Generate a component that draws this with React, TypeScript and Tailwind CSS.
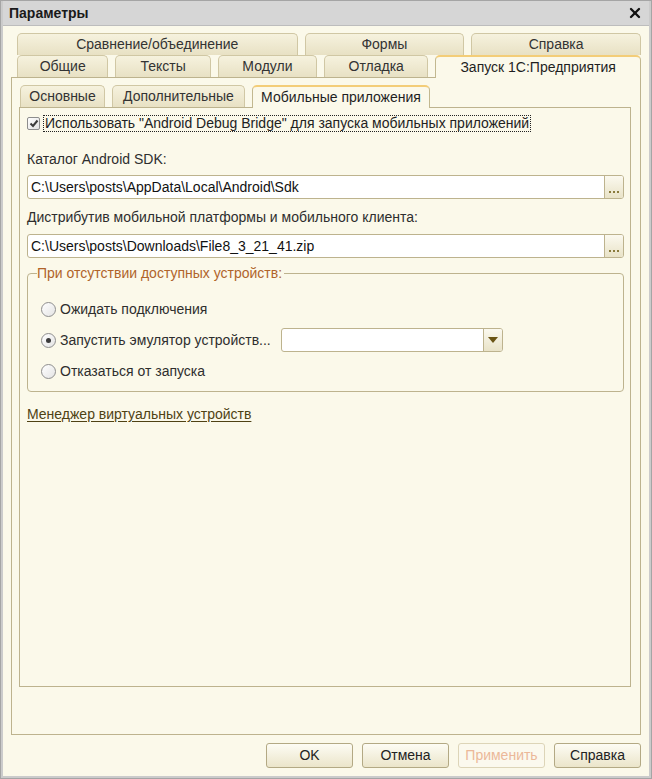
import { X } from "lucide-react"

const border = "border-[#bdb38e]"

function Tab({ label, className, active }: { label: string; className: string; active?: boolean }) {
  return (
    <div
      className={
        "flex items-center justify-center rounded-t-[5px] border border-b-0 text-[14px] " +
        (active
          ? "relative z-10 -mb-px h-[23px] bg-[#fbf9ea] border-[#c2b88f] border-t-2 border-t-[#f3cd78] text-[#1f1f1f] "
          : "h-[22px] bg-linear-to-b from-[#f6f2de] to-[#e8e1c4] border-[#d0c7a4] text-[#333] ") +
        className
      }
    >
      {label}
    </div>
  )
}

function PathInput({ value }: { value: string }) {
  return (
    <div className={`h-[24px] flex bg-white border ${border} rounded-[3px]`}>
      <div className="flex-1 flex items-center pl-[3px] text-[14px] text-[#111]">{value}</div>
      <div className={`w-[19px] border-l ${border} bg-linear-to-b from-[#fbf9ef] to-[#e9e3c8] flex items-end justify-center gap-[2px] pb-[5px] rounded-r-[2px]`}>
        <span className="w-[2px] h-[2px] bg-[#8a7b3c]" />
        <span className="w-[2px] h-[2px] bg-[#8a7b3c]" />
        <span className="w-[2px] h-[2px] bg-[#8a7b3c]" />
      </div>
    </div>
  )
}

function Radio({ checked }: { checked?: boolean }) {
  return (
    <span className="w-[15px] h-[15px] rounded-full border border-[#8e8e8e] bg-linear-to-br from-white to-[#e4e4e4] flex items-center justify-center shrink-0">
      {checked && <span className="w-[5px] h-[5px] rounded-full bg-[#3a3a3a]" />}
    </span>
  )
}

function Button({ label, disabled }: { label: string; disabled?: boolean }) {
  return (
    <div
      className={
        "w-[87px] h-[25px] flex items-center justify-center rounded-[3px] border text-[14px] " +
        (disabled
          ? "border-[#ddd5b8] bg-[#fbf9ee] text-[#ebb899]"
          : "border-[#b3a984] bg-linear-to-b from-[#fdfcf4] to-[#ebe5ca] text-[#222]")
      }
    >
      {label}
    </div>
  )
}

export default function App() {
  return (
    <div className="w-[652px] h-[779px] flex flex-col bg-[#cbcbcb] border border-[#a5a5a5] px-[2px] pb-[2px] font-['Liberation_Sans',Arial,sans-serif] text-[#2e2e2e] overflow-hidden">
      {/* title bar */}
      <div className="h-[24px] shrink-0 flex items-center justify-between pl-[6px] pr-[6px] bg-[#d6d6d6]">
        <span className="text-[14px] font-bold text-[#1a1a1a]">Параметры</span>
        <X size={16} strokeWidth={3.5} className="text-[#111]" />
      </div>

      {/* body */}
      <div className="flex-1 flex flex-col bg-[#fbf9ea] border-t border-[#bdbdbd] px-[8px] pt-[7px] pb-[8px]">
        <div className="pl-[6px] flex flex-col">
          <div className="flex gap-[7px]">
            <Tab label="Сравнение/объединение" className="w-[281px]" />
            <Tab label="Формы" className="w-[160px]" />
            <Tab label="Справка" className="w-[170px]" />
          </div>
          <div className="flex gap-[7px] items-end">
            <Tab label="Общие" className="w-[92px]" />
            <Tab label="Тексты" className="w-[96px]" />
            <Tab label="Модули" className="w-[100px]" />
            <Tab label="Отладка" className="w-[105px]" />
            <Tab label="Запуск 1С:Предприятия" className="w-[207px]" active />
          </div>
        </div>

        {/* outer panel */}
        <div className={`flex-1 flex flex-col border ${border} pl-[7px] pr-[9px] pt-[7px] pb-[47px]`}>
          <div className="flex gap-[7px] items-end pl-[1px]">
            <Tab label="Основные" className="w-[85px] h-[21px]" />
            <Tab label="Дополнительные" className="w-[133px] h-[21px]" />
            <Tab label="Мобильные приложения" className="w-[178px]" active />
          </div>

          {/* inner panel */}
          <div className={`flex-1 flex flex-col border ${border} pl-[7px] pr-[6px] pt-[7px]`}>
            <div className="flex items-center h-[17px]">
              <span className="w-[13px] h-[13px] rounded-[2px] border border-[#8d8d8d] bg-linear-to-br from-white to-[#e2e2e2] flex items-center justify-center mr-[3px]">
                <svg width="10" height="9" viewBox="0 0 10 9">
                  <path d="M1.5 4.5 L4 7 L8.5 1.5" fill="none" stroke="#3b3b3b" strokeWidth="2" />
                </svg>
              </span>
              <span className="h-[17px] flex items-center border border-dotted border-[#222] px-px text-[14px] text-[#222]">
                Использовать "Android Debug Bridge" для запуска мобильных приложений
              </span>
            </div>

            <div className="mt-[20px] text-[14px] leading-[15px]">Каталог Android SDK:</div>
            <div className="mt-[8px]">
              <PathInput value="C:\Users\posts\AppData\Local\Android\Sdk" />
            </div>

            <div className="mt-[11px] text-[14px] leading-[15px]">Дистрибутив мобильной платформы и мобильного клиента:</div>
            <div className="mt-[9px]">
              <PathInput value="C:\Users\posts\Downloads\File8_3_21_41.zip" />
            </div>

            <fieldset className={`mt-[8px] border ${border} rounded-[4px] pl-[13px] pb-[8px]`}>
              <legend className="ml-[-4px] pr-[2px] text-[14px] leading-[15px] text-[#b0642a]">
                При отсутствии доступных устройств:
              </legend>
              <div className="flex flex-col gap-[7px] pt-[16px]">
                <div className="h-[24px] flex items-center">
                  <Radio />
                  <span className="ml-[4px] text-[14px]">Ожидать подключения</span>
                </div>
                <div className="h-[24px] flex items-center">
                  <Radio checked />
                  <span className="ml-[4px] w-[221px] text-[14px]">Запустить эмулятор устройств...</span>
                  <div className={`w-[222px] h-[24px] flex bg-white border ${border} rounded-[3px]`}>
                    <div className="flex-1" />
                    <div className={`w-[19px] border-l ${border} bg-linear-to-b from-[#fbf9ef] to-[#e9e3c8] flex items-center justify-center rounded-r-[2px]`}>
                      <svg width="10" height="6" viewBox="0 0 10 6">
                        <path d="M0 0 H10 L5 6 Z" fill="#6a5414" />
                      </svg>
                    </div>
                  </div>
                </div>
                <div className="h-[24px] flex items-center">
                  <Radio />
                  <span className="ml-[4px] text-[14px]">Отказаться от запуска</span>
                </div>
              </div>
            </fieldset>

            <div className="mt-[15px] text-[14px] leading-[15px]">
              <span className="underline underline-offset-2 text-[#4f4214]">Менеджер виртуальных устройств</span>
            </div>
          </div>
        </div>

        {/* buttons */}
        <div className="mt-[8px] flex justify-end gap-[9px]">
          <Button label="OK" />
          <Button label="Отмена" />
          <Button label="Применить" disabled />
          <Button label="Справка" />
        </div>
      </div>
    </div>
  )
}
